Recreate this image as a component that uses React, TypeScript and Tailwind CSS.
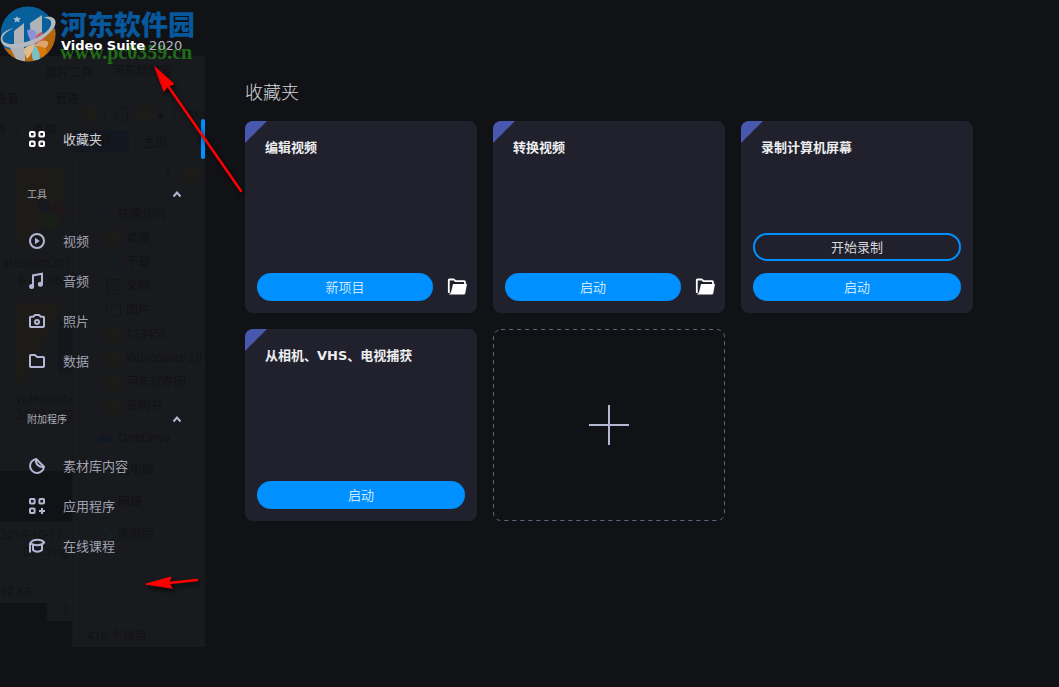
import * as React from "react";
import clsx from "clsx";

type IconProps = { className?: string };

function Icon({ children, className }: { children: React.ReactNode; className?: string }) {
  return (
    <svg
      viewBox="0 0 20 20"
      fill="none"
      stroke="currentColor"
      strokeWidth="2"
      strokeLinejoin="round"
      aria-hidden="true"
      className={clsx("h-5 w-5 shrink-0", className)}
    >
      {children}
    </svg>
  );
}

const GridIcon = () => (
  <Icon className="text-white">
    <rect x="3" y="3" width="4.6" height="4.6" rx=".8" />
    <rect x="12.400" y="3" width="4.6" height="4.6" rx=".8" />
    <rect x="3" y="12.400" width="4.6" height="4.6" rx=".8" />
    <rect x="12.400" y="12.400" width="4.6" height="4.6" rx=".8" />
  </Icon>
);

const PlayIcon = () => (
  <Icon>
    <circle cx="10" cy="10" r="7" />
    <path d="M8 6.8v6.4l4.8-3.2z" fill="currentColor" stroke="none" />
  </Icon>
);

const MusicIcon = () => (
  <Icon>
    <path d="M6 15.5V4.4l9-1.7V13" strokeLinejoin="miter" />
    <circle cx="4.6" cy="15.6" r="2.5" fill="currentColor" stroke="none" />
    <circle cx="13.4" cy="13.2" r="2.5" fill="currentColor" stroke="none" />
  </Icon>
);

const CameraIcon = () => (
  <Icon>
    <path d="M3.800 5.8h2.400L8 4h4l1.800 1.8h2.400q.8 0 .8.8v8.600q0 .8-.8.8H3.800q-.8 0-.8-.8V6.600q0-.8.8-.8z" />
    <circle cx="10" cy="11" r="2" />
  </Icon>
);

const FolderIcon = () => (
  <Icon>
    <path d="M3.800 4H8l2.200 2h6q.8 0 .8.8v8.400q0 .8-.8.8H3.800q-.8 0-.8-.8V4.800q0-.8.8-.8z" />
  </Icon>
);

const StickerIcon = () => (
  <Icon>
    <path d="M9.2 3a7 7 0 1 0 7.8 7.8L9.2 3z" />
    <path d="M9 3c-.6 5 2.2 8.400 8 8" />
  </Icon>
);

const AppsIcon = () => (
  <Icon>
    <rect x="3" y="3" width="4.6" height="4.6" rx=".8" />
    <rect x="12.400" y="3" width="4.6" height="4.6" rx=".8" />
    <rect x="3" y="12.400" width="4.6" height="4.6" rx=".8" />
    <path d="M15 12v6M12 15h6" />
  </Icon>
);

const CourseIcon = () => (
  <Icon>
    <path d="M3 16.500V7.600C4.500 4.800 7 3.800 10.500 3.800c3.300 0 5.500 1 6.700 2.600-1.500 2-3.700 2.800-6.700 2.800-3.300 0-5.500-.7-7-2" />
    <path d="M6 9v5c2 2.200 6.500 2.200 9 0V9" />
  </Icon>
);

const OpenFolderIcon = () => (
  <svg viewBox="0 0 20 20" aria-hidden="true" className="h-5 w-5">
    <path d="M1.800 16V3q0-.5.5-.5H7l1.500 1.600h8.700q.8 0 .8.8V7" fill="none" stroke="#fff" strokeWidth="1.800" strokeLinejoin="round" />
    <path d="M6 7h14l-1.800 9.500q-.3 1-1.300 1H1.800q2-1 2.400-3z" fill="#fff" />
  </svg>
);

function Chevron({ className }: IconProps) {
  return (
    <Icon className={className}>
      <path d="M6.500 12.500L10 8.500l3.500 4" strokeLinejoin="miter" />
    </Icon>
  );
}

const tools = [
  { label: "视频", icon: PlayIcon },
  { label: "音频", icon: MusicIcon },
  { label: "照片", icon: CameraIcon },
  { label: "数据", icon: FolderIcon },
];

const extras = [
  { label: "素材库内容", icon: StickerIcon },
  { label: "应用程序", icon: AppsIcon },
  { label: "在线课程", icon: CourseIcon },
];

// labels of the explorer window that shows through the translucent sidebar
const ghostLabels = [
  { text: "建文中文", x: 2, y: 10 },
  { text: "图片工具", x: 45, y: 73 },
  { text: "河东软件园", x: 112, y: 71 },
  { text: "查看", x: -5, y: 99 },
  { text: "管理", x: 55, y: 99 },
  { text: "脑", x: -6, y: 130 },
  { text: "›", x: 16, y: 130 },
  { text: "桌面", x: 32, y: 130 },
  { text: "文件", x: 89, y: 142 },
  { text: "主页", x: 143, y: 143 },
  { text: "共享", x: 196, y: 143 },
  { text: "Mov", x: 188, y: 115 },
  { text: "▾", x: 158, y: 116 },
  { text: "↑", x: 162, y: 173 },
  { text: "快速访问", x: 118, y: 214 },
  { text: "桌面", x: 126, y: 238 },
  { text: "下载", x: 126, y: 262 },
  { text: "文档", x: 126, y: 286 },
  { text: "图片", x: 126, y: 310 },
  { text: "123456", x: 126, y: 334 },
  { text: "VideoSuite 20", x: 126, y: 358 },
  { text: "河东软件园", x: 126, y: 382 },
  { text: "说明书", x: 126, y: 406 },
  { text: "OneDrive", x: 118, y: 438 },
  { text: "此电脑", x: 118, y: 470 },
  { text: "网络", x: 118, y: 502 },
  { text: "家庭组", x: 118, y: 534 },
  { text: "418 个项目", x: 87, y: 636 },
  { text: "3", x: 62, y: 610 },
];

// file names behind, cut where the front window begins
const ghostFiles = [
  { text: "arescom201", x: 2, y: 263 },
  { text: "b", x: 19, y: 280 },
  { text: "682", x: 48, y: 280 },
  { text: "VideoSuite", x: 15, y: 399 },
  { text: "20-156892", x: 16, y: 415 },
  { text: "2019-10-11", x: 0, y: 535 },
  { text: "011.png", x: 23, y: 552 },
  { text: "12 KB", x: 0, y: 592 },
];

function GhostLabel({ text, x, y }: { text: string; x: number; y: number }) {
  return (
    <span
      className="absolute -translate-y-1/2 text-xs leading-4 whitespace-nowrap text-[#111214]"
      style={{ left: x, top: y }}
    >
      {text}
    </span>
  );
}

function GhostWindow() {
  return (
    <div
      aria-hidden="true"
      className="pointer-events-none absolute inset-0 overflow-hidden font-['Open_Sans','Noto_Sans_CJK_SC',sans-serif] select-none"
    >
      <svg width="205" height="660" className="absolute top-0 left-0">
        <path d="M0 56h205v591H73V56zM0 56h73v415H0zM0 522h73v99H47v-18H0z" fill="#191a1d" />
        <path d="M72.500 152v495" stroke="#16171a" />
        <path d="M73 130h56v23H73z" fill="#131820" />
        <path d="M73 226h132" stroke="#17181b" />
        <g fill="#1c1b18">
          <path d="M83 106h13v15H83zM138 106h13v15h-13zM185 167h13v15h-13z" />
          <path d="M107 230h12v15h-12zM107 327h12v15h-12zM107 351h12v15h-12zM107 375h12v15h-12zM107 399h12v15h-12z" />
          <path d="M16 168h46v36l-40 42-6-5zM16 303h46l-40 80-6-5z" />
        </g>
        <path d="M105 108v14M174 108v14" stroke="#131417" />
        <path
          d="M116.500 108.500h11v13h-11zM119 115l3 3 4-6M107.500 279.500h11v14h-11zM110 284h6M110 287h6M110 290h6M106.500 305.500h14v10h-14z"
          fill="none"
          stroke="#131417"
        />
        <path
          d="M106 208l2 4 5 1-4 3 1 5-4-3-4 3 1-5-4-3 5-1zM110 254h6v8h5l-8 9-8-9h5z"
          fill="#131b21"
        />
        <path d="M97 442q0-5 5-5 2-4 6-2 3 1 3 4 3 0 3 3z" fill="#111723" />
        <g fill="#122022">
          <circle cx="99" cy="533" r="2.500" />
          <circle cx="107" cy="529" r="3.500" />
          <circle cx="110" cy="536" r="3.500" />
        </g>
        <circle cx="44" cy="206" r="6" fill="#15191f" />
        <circle cx="58" cy="212" r="8" fill="#1f181a" />
        <circle cx="50" cy="221" r="9" fill="#191e17" />
        <path d="M58 321h14v52H58z" fill="#15161b" />
      </svg>
      {ghostLabels.map((g, i) => (
        <GhostLabel key={i} {...g} />
      ))}
      <div className="absolute inset-y-0 left-0 w-[72px] overflow-hidden">
        {ghostFiles.map((g) => (
          <GhostLabel key={g.text} {...g} />
        ))}
      </div>
    </div>
  );
}

function Logo() {
  return (
    <svg viewBox="0 0 56 56" aria-hidden="true" className="h-14 w-14 shrink-0">
      <defs>
        <clipPath id="disc">
          <circle cx="28" cy="28" r="27.500" />
        </clipPath>
      </defs>
      <g clipPath="url(#disc)">
        <path d="M0 0h56v56H0z" fill="#07609c" />
        <path d="M0 40q10 5 20 3 20-4 32-20h4v33H0z" fill="#b8650c" />
        <path d="M14 25l10-8v27H14z" fill="#afb3b7" />
        <path d="M30 17l12-8v31l-11 6z" fill="#afb3b7" />
        <path d="M10 42h15v14l-9-3z" fill="#aeb2b7" />
        <path d="M27 24q8-2 10 5l-2 9q-7-4-8-14z" fill="#8c91d8" />
        <path d="M35 39q-1-10 6-13 4 3 3 7-3 5-9 6z" fill="#c55a61" />
        <path d="M35 39q7-7 13-3 1 4-3 6-5 1-10-3z" fill="#d9a66c" />
        <path d="M35 40q10 0 12 5-3 6-6 6-6-4-6-11z" fill="#dc7807" />
        <path d="M35 39q-5 7-2 15 5 1 7-1 0-8-5-14z" fill="#7ac0c8" />
        <path d="M34 39q-8-1-10 6l3 8q6-6 7-14z" fill="#dfbd8c" />
      </g>
      <path
        d="M14 22C-2 29-1 39 14 38 31 37 49 27 51 19c1-5-2-7-8-7 11-4 16 3 10 11C44 35 26 43 12 42-2 41-5 26 14 22z"
        fill="#b3b9bf"
      />
      <path d="M17 10l1 2 3 .2-2 1.800.7 2.600-2.700-1.400-2.400 1.400.6-2.600-2-1.800 2.800-.2z" fill="#a2bdd0" />
    </svg>
  );
}

function NavItem({ label, icon: ItemIcon }: { label: string; icon: React.ComponentType }) {
  return (
    <li>
      <a href="#" className="flex h-10 items-center gap-4 pl-[27px] text-[13px] text-[#a0a2b2] hover:text-white">
        <span className="text-[#b4b7d4]">
          <ItemIcon />
        </span>
        <span className="pt-0.5">{label}</span>
      </a>
    </li>
  );
}

function NavSection({
  title,
  items,
  className,
}: {
  title: string;
  items: typeof tools;
  className?: string;
}) {
  const [open, setOpen] = React.useState(true);
  return (
    <section className={className}>
      <button
        type="button"
        aria-expanded={open}
        onClick={() => setOpen(!open)}
        className="flex h-[54px] w-full items-center justify-between pr-[18px] pl-[27px] text-[10px] text-[#a9aab2]"
      >
        {title}
        <Chevron className={clsx("text-[#b4b7d4]", !open && "rotate-180")} />
      </button>
      {open && (
        <ul>
          {items.map((item) => (
            <NavItem key={item.label} {...item} />
          ))}
        </ul>
      )}
    </section>
  );
}

function Sidebar() {
  return (
    <aside className="relative w-[205px] shrink-0">
      <GhostWindow />
      <div className="relative">
        <header className="flex h-[119px] items-start pt-1.5">
          <Logo />
          <div className="relative ml-1 w-[137px] whitespace-nowrap">
            <p className="pt-0.5 text-[27px] leading-9 font-black text-[#07589b]">河东软件园</p>
            <p className="-mt-1.5 font-['Liberation_Serif'] text-[20px] leading-7 font-bold text-[#216c19]">
              www.pc0359.cn
            </p>
            <h1 className="absolute top-[31px] left-px text-[13px] leading-[18px] text-[#b6b7be]">
              <strong className="text-white">Video Suite</strong> 2020
            </h1>
          </div>
        </header>
        <nav>
          <a
            href="#"
            aria-current="page"
            className="relative flex h-10 items-center gap-4 pl-[27px] text-[13px] text-[#d0d1d6]"
          >
            <GridIcon />
            <span className="pt-0.5">收藏夹</span>
            <span className="absolute inset-y-0 right-0 w-1 rounded-xs bg-[#0090ff]" />
          </a>
          <NavSection title="工具" items={tools} className="pt-2" />
          <NavSection title="附加程序" items={extras} className="pt-[11px]" />
        </nav>
      </div>
    </aside>
  );
}

type CardProps = {
  title: string;
  action: string;
  secondary?: string;
  folder?: boolean;
};

const cards: CardProps[] = [
  { title: "编辑视频", action: "新项目", folder: true },
  { title: "转换视频", action: "启动", folder: true },
  { title: "录制计算机屏幕", action: "启动", secondary: "开始录制" },
  { title: "从相机、VHS、电视捕获", action: "启动" },
];

function Card({ title, action, secondary, folder }: CardProps) {
  return (
    <article className="relative flex h-48 flex-col justify-between overflow-hidden rounded-lg bg-[#20212c] pt-[17px] pb-3">
      <svg viewBox="0 0 22 22" aria-hidden="true" className="absolute top-0 left-0 h-[22px] w-[22px]">
        <path d="M0 0h22L0 22z" fill="#4758ae" />
      </svg>
      <h3 className="px-5 text-[13px] leading-5 font-bold text-[#eeeef0]">{title}</h3>
      <div className="flex flex-col gap-3">
        {secondary && (
          <button
            type="button"
            className="mx-3 flex h-7 items-center justify-center rounded-full border-2 border-[#0090ff] pt-0.5 text-[13px] text-[#d5d6dc]"
          >
            {secondary}
          </button>
        )}
        <div className={clsx("flex items-center gap-3.5 pl-3", folder ? "pr-2.5" : "pr-3")}>
          <button
            type="button"
            className="flex h-7 flex-1 items-center justify-center rounded-full bg-[#0090ff] pt-0.5 text-[13px] text-[#c9e6ff] hover:bg-[#1a9bff]"
          >
            {action}
          </button>
          {folder && (
            <button type="button" aria-label="打开文件夹" className="h-6 w-5">
              <OpenFolderIcon />
            </button>
          )}
        </div>
      </div>
    </article>
  );
}

function AddCard() {
  return (
    <button type="button" aria-label="添加" className="h-48">
      <svg width="100%" height="100%" aria-hidden="true" viewBox="0 0 232 192" fill="none">
        <rect x=".5" y=".5" width="231" height="191" rx="7.500" stroke="#62667f" strokeDasharray="4 4" />
        <path d="M116 76v40M96 96h40" stroke="#b4b7d4" strokeWidth="2" />
      </svg>
    </button>
  );
}

function Arrows() {
  return (
    <svg
      width="260"
      height="600"
      aria-hidden="true"
      className="pointer-events-none absolute top-0 left-0 drop-shadow-[2px_3px_2px_rgba(0,0,0,0.7)]"
    >
      <g fill="#f00" stroke="#f00" strokeLinecap="round">
        <path d="M168 86l73 105" strokeWidth="2.500" />
        <path d="M155 67l19 17-6 2-4 5z" strokeWidth="1" />
        <path d="M169 583l28-3" strokeWidth="2.500" />
        <path d="M146 584l25-7-2 6 3 5z" strokeWidth="1" />
      </g>
    </svg>
  );
}

export default function App() {
  return (
    <div className="relative flex min-h-screen bg-[#111216] font-['DejaVu_Sans','Noto_Sans_CJK_SC',sans-serif]" lang="zh-CN">
      <Sidebar />
      <main className="flex-1 px-10 pt-[79px] pb-10">
        <h2 className="mb-[14px] text-[18px] leading-7 font-light text-[#d6d7da]">收藏夹</h2>
        <div className="grid grid-cols-[repeat(auto-fill,232px)] gap-4">
          {cards.map((card) => (
            <Card key={card.title} {...card} />
          ))}
          <AddCard />
        </div>
      </main>
      <Arrows />
    </div>
  );
}
